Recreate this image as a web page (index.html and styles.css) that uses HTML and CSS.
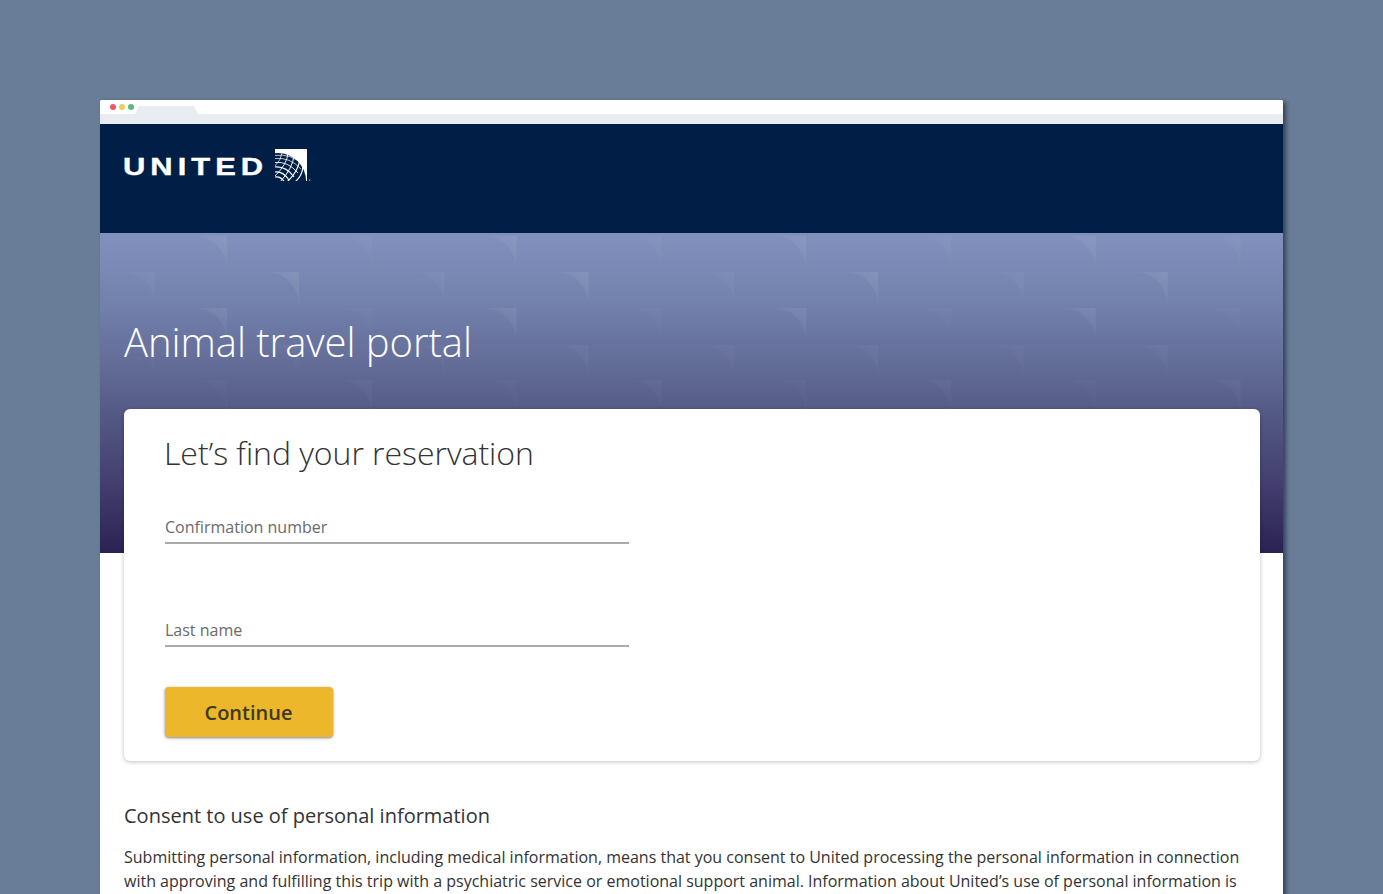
FILE: index.html
```html
<!DOCTYPE html>
<html lang="en">
<head>
<meta charset="utf-8">
<title>Animal travel portal</title>
<link rel="stylesheet" href="styles.css">
</head>
<body>
<div class="window">
  <div class="chrome">
    <div class="dots"><span class="dot red"></span><span class="dot yellow"></span><span class="dot green"></span></div>
    <div class="tab"></div>
  </div>
  <header class="topbar">
    <div class="logo">
      <span class="wordmark">UNITED</span>
      <svg class="globe" width="36" height="33" viewBox="0 0 36 33" aria-hidden="true">
        <defs><clipPath id="sq"><rect width="32" height="32"/></clipPath></defs>
        <rect width="32" height="32" fill="#fff"/>
        <g clip-path="url(#sq)">
          <circle cx="3" cy="32" r="28" fill="#001e46"/>
          <g fill="none" stroke="#fff">
            <path stroke-width=".7" d="M0 6.5Q16 4 28 16"/>
            <path stroke-width=".7" d="M0 9.5Q15 8 26 20"/>
            <path stroke-width=".9" d="M0 13.5Q13 12 23 24"/>
            <path stroke-width="1.1" d="M0 18Q11 17 19 28"/>
            <path stroke-width="1.2" d="M0 23Q8 22 14 31"/>
            <path stroke-width="1.2" d="M0 28Q5 27 9 32"/>
            <path stroke-width="1.2" d="M28 18Q27 27 20 33"/>
            <path stroke-width="1.2" d="M25 10Q23 23 12 33"/>
            <path stroke-width="1" d="M19 6Q18 19 5 33"/>
            <path stroke-width=".9" d="M13 4.5Q12 15 0 27"/>
            <path stroke-width=".7" d="M7 4Q6 11 0 17"/>
          </g>
        </g>
        <circle cx="34.5" cy="31" r=".8" fill="#9fb0c8"/>
      </svg>
    </div>
  </header>
  <section class="hero">
    <svg class="hero-pattern" width="100%" height="100%" aria-hidden="true">
      <defs>
        <linearGradient id="fade" x1="1" y1="0" x2="0" y2="1">
          <stop offset="0" stop-color="#fff" stop-opacity=".85"/>
          <stop offset=".7" stop-color="#fff" stop-opacity=".1"/>
        </linearGradient>
        <path id="c" d="M-32 0H0V34A32 34 0 0 0-32 0Z" fill="url(#fade)"/>
        <pattern id="tiles" width="289.6" height="320" patternUnits="userSpaceOnUse">
          <use href="#c" x="127" y="3" opacity=".1"/>
          <use href="#c" x="272" y="3" opacity=".05"/>
          <use href="#c" x="55" y="39" opacity=".05"/>
          <use href="#c" x="199" y="39" opacity=".11"/>
          <use href="#c" x="127" y="75" opacity=".09"/>
          <use href="#c" x="272" y="75" opacity=".025"/>
          <use href="#c" x="55" y="112" opacity=".04"/>
          <use href="#c" x="199" y="112" opacity=".05"/>
          <use href="#c" x="127" y="147" opacity=".03"/>
          <use href="#c" x="272" y="147" opacity=".05"/>
        </pattern>
      </defs>
      <rect width="100%" height="100%" fill="url(#tiles)"/>
    </svg>
    <h1 class="hero-title">Animal travel portal</h1>
  </section>
  <main class="content">
    <form class="card">
      <h2 class="card-title">Let’s find your reservation</h2>
      <label class="field">Confirmation number</label>
      <label class="field field-second">Last name</label>
      <button type="button" class="continue">Continue</button>
    </form>
    <h3 class="consent-title">Consent to use of personal information</h3>
    <p class="consent-text">Submitting personal information, including medical information, means that you consent to United processing the personal information in connection with approving and fulfilling this trip with a psychiatric service or emotional support animal. Information about United’s use of personal information is</p>
  </main>
</div>
</body>
</html>
```

FILE: styles.css
```css
* { box-sizing: border-box; }
html, body { height: 100%; }
body {
  margin: 0;
  padding: 100px 100px 0;
  background: #697d98;
  overflow: hidden;
  font-family: "Open Sans", "Liberation Sans", sans-serif;
  color: #333;
}
.window {
  width: 1183px;
  height: 900px;
  background: #fff;
  border-radius: 2px 2px 0 0;
  box-shadow: 3px 2px 4px rgba(25, 35, 55, .65);
}
.chrome {
  height: 24px;
  position: relative;
  background: linear-gradient(#fff 14px, #e9edf1 14px);
  border-radius: 2px 2px 0 0;
}
.dots { display: flex; gap: 3px; padding: 4px 0 0 10px; }
.dot { width: 6px; height: 6px; border-radius: 50%; }
.red { background: #f0566f; }
.yellow { background: #eccf5a; }
.green { background: #5cbb7a; }
.tab {
  position: absolute;
  left: 35px;
  top: 6px;
  width: 63px;
  height: 8px;
  background: #e9edf1;
  clip-path: polygon(4px 0, 59px 0, 63px 100%, 0 100%);
}
.topbar {
  height: 109px;
  background: #001e46;
  padding: 25px 0 0 23px;
}
.logo { display: flex; align-items: flex-start; }
.wordmark {
  width: 152px;
  margin-top: 4px;
  font-family: "Liberation Sans", Arial, sans-serif;
  font-weight: 700;
  font-size: 24.5px;
  line-height: 27px;
  letter-spacing: 4px;
  color: #fff;
  -webkit-text-stroke: .4px #fff;
  transform: scaleX(1.26);
  transform-origin: left center;
}
.globe { display: block; }
.hero {
  position: relative;
  height: 320px;
  padding: 82px 0 0 24px;
  background: linear-gradient(#8190bc 0, #7483ae 20%, #5f6893 45%, #545a85 56%, #443f70 78%, #2a2252 100%);
}
.hero-pattern { position: absolute; inset: 0; }
.hero-title {
  position: relative;
  margin: 0;
  font-weight: 300;
  font-size: 40px;
  line-height: 54px;
  letter-spacing: -.05px;
  color: #fff;
}
.content {
  position: relative;
  padding: 0 24px;
}
.card {
  height: 352px;
  margin: -144px -1px 0 0;
  padding: 22px 0 0 41px;
  background: #fff;
  border-radius: 6px;
  box-shadow: 0 1px 4px rgba(0, 0, 0, .25);
}
.card-title {
  margin: 0 0 0 -1px;
  font-weight: 300;
  font-size: 32px;
  line-height: 44px;
  letter-spacing: -.04px;
  color: #333;
}
.field {
  display: block;
  width: 464px;
  height: 34px;
  margin-top: 35px;
  padding-top: 6px;
  border-bottom: 2px solid #aaa;
  font-size: 16px;
  line-height: 22px;
  color: #6a6a6a;
}
.field-second { margin-top: 69px; }
.continue {
  display: block;
  width: 168px;
  height: 50px;
  margin: 40px 0 0 -.5px;
  border: 0;
  border-radius: 4px;
  background: #ecb72a;
  box-shadow: 0 1px 3px rgba(0, 0, 0, .5);
  font-family: inherit;
  font-weight: 600;
  font-size: 20px;
  color: #40391e;
}
.consent-title {
  margin: 41px 0 0;
  font-weight: 400;
  font-size: 20px;
  line-height: 28px;
  color: #333;
}
.consent-text {
  margin: 15px 0 0;
  font-size: 16px;
  line-height: 24px;
  color: #333;
}
```
